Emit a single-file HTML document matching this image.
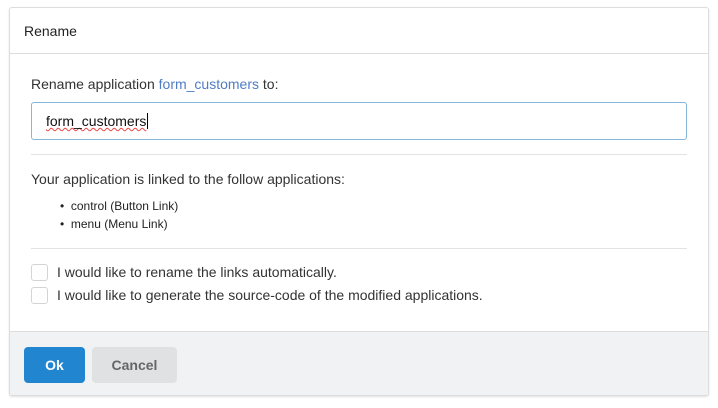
<!DOCTYPE html>
<html><head><style>
*{box-sizing:border-box;margin:0;padding:0}
body{width:718px;height:408px;background:#fff;font-family:"Liberation Sans",Arial,sans-serif;color:#333;position:relative;overflow:hidden}
.dlg{position:absolute;left:9px;top:7px;width:700px;height:389px;border:1px solid #ddd;border-radius:3px;box-shadow:0 1px 2px rgba(0,0,0,.12);background:#fff;overflow:hidden}
.abs{position:absolute;white-space:nowrap}
.hdr{left:0;top:0;width:100%;height:46px;border-bottom:1px solid #ddd}
.sep{left:21px;width:656px;height:1px;background:#e3e3e3}
.inp{left:21px;top:94px;width:656px;height:38px;border:1px solid #85b7d9;border-radius:3px;padding-left:14px;line-height:36px;font-size:14px;color:#111}
.cb{width:17px;height:17px;border:1px solid #d4d4d5;border-radius:3px;left:21px}
.foot{left:0;top:323px;width:100%;height:66px;background:#f1f2f4;border-top:1px solid #ddd}
.btn{top:15px;height:36px;border-radius:4px;font-weight:bold;font-size:14px;text-align:center;line-height:36px}
</style></head><body>
<div class="dlg">
<div class="abs hdr"><span class="abs" style="left:14px;top:15px;font-size:14px;color:#222">Rename</span></div>
<div class="abs" style="left:21px;top:68px;font-size:14px;color:#333">Rename application <span style="color:#4f7cc6">form_customers</span> to:</div>
<div class="abs inp"><span style="text-decoration:underline wavy #e44;text-decoration-thickness:1px">form_customers</span><span style="border-left:1px solid #000;margin-left:1px"></span></div>
<div class="abs sep" style="top:146px"></div>
<div class="abs" style="left:21px;top:163px;font-size:14px">Your application is linked to the follow applications:</div>
<div class="abs" style="left:50px;top:191px;font-size:12px;color:#222">• &nbsp;control (Button Link)</div>
<div class="abs" style="left:50px;top:209px;font-size:12px;color:#222">• &nbsp;menu (Menu Link)</div>
<div class="abs sep" style="top:240px"></div>
<div class="abs cb" style="top:256px"></div>
<div class="abs" style="left:47px;top:256px;font-size:14px">I would like to rename the links automatically.</div>
<div class="abs cb" style="top:279px"></div>
<div class="abs" style="left:47px;top:279px;font-size:14px">I would like to generate the source-code of the modified applications.</div>
<div class="abs foot">
<div class="abs btn" style="left:14px;width:61px;background:#2185d0;color:#fff">Ok</div>
<div class="abs btn" style="left:82px;width:85px;background:#e0e1e2;color:#666">Cancel</div>
</div>
</div>
</body></html>
